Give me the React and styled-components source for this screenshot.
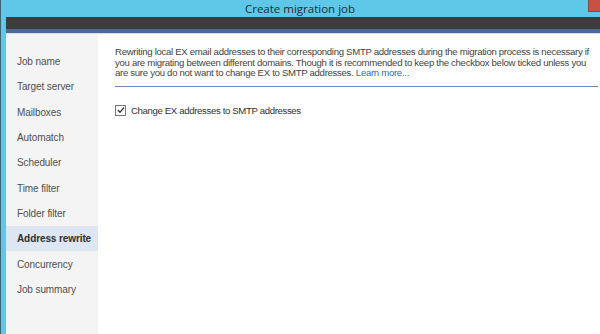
import React from 'react';
import styled, { createGlobalStyle } from 'styled-components';

const GlobalStyle = createGlobalStyle`
  html, body {
    margin: 0;
    padding: 0;
    width: 600px;
    height: 334px;
    overflow: hidden;
    background: #ffffff;
  }
  body {
    font-family: 'Liberation Sans', Arial, sans-serif;
  }
`;

const Window = styled.div`
  width: 600px;
  height: 334px;
  display: flex;
  background: #5fc8e8;
  border-left: 1px solid #3a6273;
  box-sizing: border-box;
`;

const Frame = styled.div`
  flex: 1;
  display: flex;
  flex-direction: column;
  padding-left: 5px;
  min-width: 0;
`;

const TitleBar = styled.div`
  height: 17px;
  position: relative;
  display: flex;
  align-items: center;
  justify-content: center;
  font-family: 'Open Sans', 'Liberation Sans', sans-serif;
  font-size: 11.5px;
  color: #1e2a30;
  padding-right: 6px;
`;

const CloseButton = styled.div`
  position: absolute;
  top: 0;
  right: 0;
  width: 11px;
  height: 11px;
  background: #c75042;
  border-left: 1px solid #8a4a44;
  border-bottom: 1px solid #8a4a44;
`;

const DarkBand = styled.div`
  height: 12px;
  background: #3d3d3d;
`;

const BlueBand = styled.div`
  height: 4px;
  background: #4e6b98;
  border-bottom: 1px solid #d7dde6;
`;

const Body = styled.div`
  flex: 1;
  display: flex;
  background: #ffffff;
  min-height: 0;
`;

const Sidebar = styled.nav`
  width: 92px;
  background: #f4f4f4;
  display: flex;
  flex-direction: column;
  padding-top: 15px;
`;

const NavItem = styled.div`
  height: 25.3px;
  display: flex;
  align-items: center;
  padding-left: 11px;
  font-size: 10px;
  letter-spacing: -0.1px;
  color: ${p => (p.$active ? '#2f2f2f' : '#505050')};
  font-weight: ${p => (p.$active ? 'bold' : 'normal')};
  background: ${p => (p.$active ? '#dde6f2' : 'transparent')};
`;

const Content = styled.div`
  flex: 1;
  padding: 13px 2px 0 17px;
  display: flex;
  flex-direction: column;
`;

const Intro = styled.p`
  margin: 0;
  font-size: 9.6px;
  letter-spacing: -0.3px;
  line-height: 10.6px;
  color: #444444;
  padding-bottom: 7px;
  border-bottom: 1px solid #6e8bb8;
  white-space: nowrap;
`;

const Link = styled.a`
  color: #2f6fb5;
  text-decoration: none;
`;

const CheckRow = styled.label`
  display: flex;
  align-items: center;
  gap: 5px;
  margin-top: 18px;
  font-size: 9.6px;
  letter-spacing: -0.35px;
  color: #333333;
`;

const Box = styled.span`
  width: 9px;
  height: 9px;
  border: 1px solid #7a7a7a;
  background: #ffffff;
  display: flex;
  align-items: center;
  justify-content: center;
`;

const steps = [
  'Job name',
  'Target server',
  'Mailboxes',
  'Automatch',
  'Scheduler',
  'Time filter',
  'Folder filter',
  'Address rewrite',
  'Concurrency',
  'Job summary',
];

const App = () => {
  return (
    <>
      <GlobalStyle />
      <Window>
        <Frame>
          <TitleBar>
            Create migration job
            <CloseButton />
          </TitleBar>
          <DarkBand />
          <BlueBand />
          <Body>
            <Sidebar>
              {steps.map(s => (
                <NavItem key={s} $active={s === 'Address rewrite'}>
                  {s}
                </NavItem>
              ))}
            </Sidebar>
            <Content>
              <Intro>
                Rewriting local EX email addresses to their corresponding SMTP addresses during the migration process is necessary if
                <br />
                you are migrating between different domains. Though it is recommended to keep the checkbox below ticked unless you
                <br />
                are sure you do not want to change EX to SMTP addresses. <Link>Learn more...</Link>
              </Intro>
              <CheckRow>
                <Box>
                  <svg width="8" height="8" viewBox="0 0 8 8">
                    <path d="M1 4.2 L3 6.3 L7 1.5" fill="none" stroke="#333" strokeWidth="1.3" />
                  </svg>
                </Box>
                Change EX addresses to SMTP addresses
              </CheckRow>
            </Content>
          </Body>
        </Frame>
      </Window>
    </>
  );
};

export default App;
